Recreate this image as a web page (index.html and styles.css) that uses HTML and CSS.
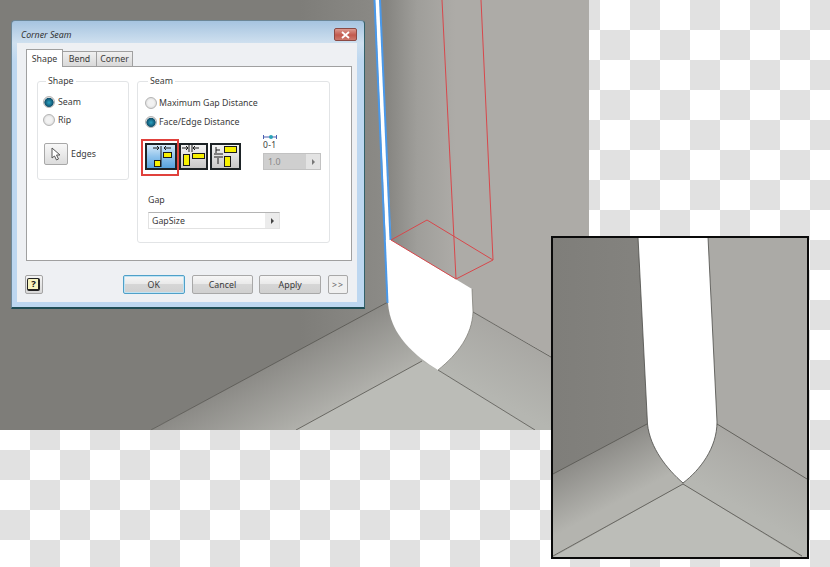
FILE: index.html
```html
<!DOCTYPE html>
<html lang="en">
<head>
  <meta charset="UTF-8">
  <title>Corner Seam</title>
  <link rel="stylesheet" href="styles.css">
</head>
<body>
  <div class="stage">
    <!-- the CAD viewport behind the dialog -->
    <svg class="scene" width="589" height="430" viewBox="0 0 589 430">
      <defs>
        <linearGradient id="leftWall" gradientUnits="userSpaceOnUse" x1="300" y1="0" x2="388" y2="0">
          <stop offset="0" stop-color="#7e7d79"/>
          <stop offset="1" stop-color="#8c8b87"/>
        </linearGradient>
        <linearGradient id="rightWall" gradientUnits="userSpaceOnUse" x1="386" y1="0" x2="455" y2="0">
          <stop offset="0" stop-color="#858480"/>
          <stop offset="0.45" stop-color="#9f9e9a"/>
          <stop offset="1" stop-color="#adaba7"/>
        </linearGradient>
        <linearGradient id="leftFloor" gradientUnits="userSpaceOnUse" x1="300" y1="350" x2="334" y2="412">
          <stop offset="0" stop-color="#8c8b87"/>
          <stop offset="1" stop-color="#b2b2ad"/>
        </linearGradient>
        <linearGradient id="rightFloor" gradientUnits="userSpaceOnUse" x1="500" y1="330" x2="470" y2="385">
          <stop offset="0" stop-color="#a9a8a4"/>
          <stop offset="1" stop-color="#b5b6b1"/>
        </linearGradient>
      </defs>
      <polygon fill="url(#leftWall)" points="0,0 376,0 388,303 151,430 0,430"/>
      <polygon fill="url(#rightWall)" points="376,0 589,0 589,378 473,312 388,303"/>
      <polygon fill="url(#leftFloor)" points="151,430 388,302 438,370 296,430"/>
      <polygon fill="url(#rightFloor)" points="473,312 589,378 589,430 535,430 438,370"/>
      <polygon fill="#bbbcb7" points="296,430 422,361 438,370 535,430"/>
      <g class="edge">
        <line x1="151" y1="430" x2="388" y2="302"/>
        <line x1="473" y1="312" x2="589" y2="379"/>
        <line x1="296" y1="430" x2="422" y2="361"/>
        <line x1="438" y1="370" x2="535" y2="430"/>
      </g>
      <path class="cut" d="M391 240 L472 289 L473 312 C472 335 458 354 438 370 C415 356 390 335 388 303 L385 240 Z"/>
      <path class="cut-line" d="M472 289 L473 312 C472 335 458 354 438 370"/>
      <polygon fill="#fff" points="375,0 380,0 391,240 391,246 386,246"/>
      <g class="band">
        <line x1="374.500" y1="0" x2="387.500" y2="303"/>
        <line x1="380" y1="0" x2="390.500" y2="240"/>
      </g>
      <g class="wire">
        <polygon points="391,240 427,220 493,260 456,279"/>
        <line x1="442" y1="0" x2="456" y2="279"/>
        <line x1="481" y1="0" x2="493" y2="260"/>
      </g>
    </svg>

    <div class="inset">
      <svg width="254" height="319" viewBox="553 238 254 319">
        <defs>
          <linearGradient id="insetLeftFloor" gradientUnits="userSpaceOnUse" x1="600" y1="449" x2="626" y2="498">
            <stop offset="0" stop-color="#8d8c88"/>
            <stop offset="1" stop-color="#b4b4af"/>
          </linearGradient>
          <linearGradient id="insetRightFloor" gradientUnits="userSpaceOnUse" x1="765" y1="452" x2="735" y2="505">
            <stop offset="0" stop-color="#aaa9a5"/>
            <stop offset="1" stop-color="#b6b7b2"/>
          </linearGradient>
          <linearGradient id="insetLeftWall" gradientUnits="userSpaceOnUse" x1="553" y1="0" x2="650" y2="0">
            <stop offset="0" stop-color="#7f7e7a"/>
            <stop offset="1" stop-color="#84837f"/>
          </linearGradient>
        </defs>
        <rect x="553" y="238" width="254" height="319" fill="url(#insetLeftWall)"/>
        <polygon fill="#abaaa6" points="700,238 807,238 807,479 717,424"/>
        <polygon fill="url(#insetLeftFloor)" points="553,474 647,424 683,484 553,557"/>
        <polygon fill="url(#insetRightFloor)" points="717,424 807,479 807,557 802,557 683,484"/>
        <polygon fill="#bcbdb8" points="553,557 683,484 802,557"/>
        <g class="edge">
          <line x1="553" y1="474" x2="647" y2="424"/>
          <line x1="717" y1="424" x2="807" y2="479"/>
          <line x1="683" y1="484" x2="553" y2="556"/>
          <line x1="683" y1="484" x2="802" y2="556"/>
        </g>
        <path class="cut cut-inset" d="M638 237 L647.500 424 C650 448 667 469 683 483 C700 470 717 448 717 422 L708 237 Z"/>
      </svg>
    </div>

    <div class="dialog">
      <div class="titlebar">
        <span class="title">Corner Seam</span>
        <span class="close">
          <svg width="9" height="8" viewBox="0 0 9 8"><path d="M1 1 L8 7 M8 1 L1 7"/></svg>
        </span>
      </div>
      <div class="client">
        <div class="tabs">
          <span class="tab tab-active">Shape</span>
          <span class="tab tab-bend">Bend</span>
          <span class="tab tab-corner">Corner</span>
        </div>
        <div class="panel">
          <fieldset class="group group-shape">
            <legend>Shape</legend>
            <div class="option"><span class="radio radio-on"></span>Seam</div>
            <div class="option"><span class="radio"></span>Rip</div>
            <div class="edges">
              <span class="btn-pick">
                <svg width="12" height="14" viewBox="0 0 12 14"><path d="M2 1 L2 11 L4.500 9 L6.500 13 L8.500 12 L6.500 8 L10 8 Z"/></svg>
              </span>
              Edges
            </div>
          </fieldset>
          <fieldset class="group group-seam">
            <legend>Seam</legend>
            <div class="option"><span class="radio"></span>Maximum Gap Distance</div>
            <div class="option"><span class="radio radio-on"></span>Face/Edge Distance</div>
            <div class="tool-row">
              <div class="tools">
                <span class="tool tool-active">
                  <svg width="28" height="23" viewBox="0 0 28 23">
                    <path class="dim" d="M6 3 H12 M10 1 L12 3 L10 5 M14 1 V22 M17 3 H24 M19 1 L17 3 L19 5"/>
                    <rect class="block" x="16.500" y="7.500" width="8" height="5"/>
                    <rect class="block" x="7.500" y="15.500" width="6" height="6"/>
                  </svg>
                </span>
                <span class="tool tool-mid">
                  <svg width="25" height="23" viewBox="0 0 25 23">
                    <path class="dim" d="M1 3 H7 M5 1 L7 3 L5 5 M8 0 V7 M11 0 V7 M12 3 H18 M14 1 L12 3 L14 5"/>
                    <rect class="block" x="2.500" y="9.500" width="6" height="11"/>
                    <rect class="block" x="11.500" y="8.500" width="12" height="5"/>
                  </svg>
                </span>
                <span class="tool">
                  <svg width="27" height="23" viewBox="0 0 27 23">
                    <path class="dim" d="M4 2 V8 M2 9 H11 M2 12 H11 M6 13 V19 M4 5 H8"/>
                    <rect class="block" x="12.500" y="1.500" width="12" height="6"/>
                    <rect class="block" x="12.500" y="11.500" width="6" height="10"/>
                  </svg>
                </span>
              </div>
              <div class="param">
                <div class="param-icon">
                  <svg width="14" height="6" viewBox="0 0 14 6">
                    <path d="M0.500 1 V5 M13.500 1 V5 M1 3 H13" stroke="#4a5fb0" fill="none"/>
                    <circle cx="8" cy="3" r="2" fill="#2aa3b8"/>
                  </svg>
                  <span class="param-range">0-1</span>
                </div>
                <div class="spinner">
                  <span class="spinner-value">1.0</span>
                  <span class="spinner-arrow"></span>
                </div>
              </div>
            </div>
            <div class="gap-label">Gap</div>
            <div class="combo">
              <span class="combo-value">GapSize</span>
              <span class="combo-arrow"></span>
            </div>
          </fieldset>
        </div>
        <div class="footer">
          <span class="help"><span class="help-mark">?</span></span>
          <span class="btn btn-default">OK</span>
          <span class="btn btn-cancel">Cancel</span>
          <span class="btn">Apply</span>
          <span class="btn btn-more">&gt;&gt;</span>
        </div>
      </div>
    </div>
  </div>
</body>
</html>
```

FILE: styles.css
```css
body {
  margin: 0;
  font-family: "Noto Sans", sans-serif;
  font-size: 8.800px;
  color: #3a3a3a;
}
.stage {
  position: relative;
  width: 830px;
  height: 567px;
  overflow: hidden;
  background: repeating-conic-gradient(#e1e1e1 0 25%, #fff 0 50%) 0 0 / 60px 60px;
}
.scene {
  position: absolute;
  left: 0;
  top: 0;
}
.edge line {
  stroke: #55544f;
  stroke-width: 0.8;
}
.cut {
  fill: #fff;
}
.cut-line {
  fill: none;
  stroke: #77766f;
  stroke-width: 0.7;
}
.cut-inset {
  stroke: #4a4a46;
  stroke-width: 0.8;
}
.band line {
  stroke: #4a98e8;
  stroke-width: 2;
}
.wire polygon,
.wire line {
  fill: none;
  stroke: #d8474b;
  stroke-width: 1;
}
.inset {
  position: absolute;
  left: 551px;
  top: 236px;
  width: 254px;
  height: 319px;
  border: 2px solid #0a0a0a;
  background: #7f7e7a;
}
.inset svg {
  display: block;
}

/* dialog */
.dialog {
  position: absolute;
  left: 11px;
  top: 20px;
  width: 354px;
  height: 289px;
  box-sizing: border-box;
  display: flex;
  flex-direction: column;
  padding: 0 7px 5px 5px;
  border: 1px solid #6d8797;
  border-right: 1px solid #33616a;
  border-bottom: 2px solid #1f4d55;
  border-radius: 4px 4px 0 0;
  background: linear-gradient(#a6c4e0 0, #cfe0ef 22px, #bdd7f0 40px);
}
.titlebar {
  height: 22px;
  box-sizing: border-box;
  padding-top: 5px;
  flex: none;
  display: flex;
  align-items: center;
  justify-content: space-between;
}
.title {
  font-style: italic;
  color: #333;
  padding-left: 4px;
}
.close {
  width: 23px;
  height: 13px;
  display: flex;
  align-items: center;
  justify-content: center;
  box-sizing: border-box;
  border: 1px solid #8b4a44;
  border-radius: 2px;
  background: linear-gradient(#dc9a90, #c25a4e 55%, #cc7a6e);
}
.close path {
  stroke: #fff;
  stroke-width: 1.8;
  fill: none;
}
.client {
  flex: 1;
  display: flex;
  flex-direction: column;
  padding: 6px 6px 0 9px;
  background: #eef0f3;
}
.tabs {
  display: flex;
  align-items: flex-end;
  height: 18px;
  margin-bottom: -1px;
  position: relative;
}
.tab {
  height: 15px;
  margin-bottom: 1px;
  box-sizing: border-box;
  display: flex;
  align-items: center;
  justify-content: center;
  border: 1px solid #a0a0a0;
  border-bottom: none;
  border-left: none;
  background: linear-gradient(#f0f0f0, #d9d9d9);
}
.tab-active {
  width: 37px;
  height: 18px;
  margin-bottom: 0;
  border-left: 1px solid #a0a0a0;
  background: #fff;
}
.tab-bend {
  width: 34px;
}
.tab-corner {
  width: 36px;
}
.panel {
  width: 326px;
  height: 195px;
  box-sizing: border-box;
  display: flex;
  align-items: flex-start;
  gap: 8px;
  padding: 8px 0 0 10px;
  border: 1px solid #a0a0a0;
  background: #fff;
}
.group {
  margin: 0;
  min-width: 0;
  box-sizing: border-box;
  border: 1px solid #e2e4e6;
  border-radius: 3px;
}
.group legend {
  margin-left: 3px;
  padding: 0 2px;
  line-height: 13px;
}
.group-shape {
  width: 92px;
  height: 105px;
  padding: 5px 0 0 5px;
}
.group-seam {
  width: 193px;
  height: 168px;
  padding: 5px 0 0 7px;
}
.option {
  height: 18px;
  display: flex;
  align-items: center;
  gap: 3px;
}
.group-seam .option {
  height: 19px;
  gap: 2px;
}
.radio {
  width: 12px;
  height: 12px;
  box-sizing: border-box;
  flex: none;
  border: 1px solid #b4b4b4;
  border-radius: 50%;
  background: radial-gradient(circle, #f2f2f2 0, #f2f2f2 40%, #cfcfcf 100%);
}
.radio-on {
  background: radial-gradient(circle at 50% 55%, #2aa3c2 0, #0f4f6c 58%, #dcdcdc 66%);
}
.edges {
  display: flex;
  align-items: center;
  gap: 3px;
  margin: 14px 0 0 1px;
}
.btn-pick {
  width: 24px;
  height: 22px;
  box-sizing: border-box;
  display: flex;
  align-items: center;
  justify-content: center;
  border: 1px solid #a8a8a8;
  border-radius: 2px;
  background: linear-gradient(#f8f8f8, #dcdcdc);
}
.btn-pick path {
  fill: #fff;
  stroke: #555;
  stroke-width: 1;
}
.tool-row {
  display: flex;
  align-items: flex-end;
  margin-top: 3px;
}
.tools {
  display: flex;
  gap: 2px;
  width: 96px;
}
.tool {
  position: relative;
  flex: none;
  width: 31px;
  height: 27px;
  box-sizing: border-box;
  display: flex;
  align-items: center;
  justify-content: center;
  border: 2px solid #1d2326;
  background: linear-gradient(#f4f4f4, #c8c8c8);
}
.tool-active {
  width: 32px;
  background: linear-gradient(#d5e9f8, #8fc3ec 50%, #57a2dd);
}
.tool-mid {
  width: 29px;
}
.tool-active::after {
  content: "";
  position: absolute;
  left: -6px;
  right: -4px;
  top: -6px;
  bottom: -8px;
  border: 2px solid #e0413c;
}
.tool svg {
  display: block;
}
.dim {
  fill: none;
  stroke: #1a1a1a;
  stroke-width: 1;
}
.block {
  fill: #f6f000;
  stroke: #1a1a1a;
  stroke-width: 1;
}
.param {
  margin-left: 22px;
}
.param-icon {
  height: 16px;
  margin-bottom: 3px;
  display: flex;
  flex-direction: column;
  align-items: flex-start;
}
.param-icon svg {
  display: block;
  flex: none;
}
.param-range {
  line-height: 9px;
  font-size: 8.500px;
  letter-spacing: 0.300px;
}
.spinner {
  width: 58px;
  height: 17px;
  box-sizing: border-box;
  display: flex;
  align-items: center;
  border: 1px solid #c2c2c2;
  background: #cfcfcf;
  color: #888;
}
.spinner-value {
  flex: 1;
  padding-left: 4px;
}
.spinner-arrow,
.combo-arrow {
  flex: none;
  height: 100%;
  display: flex;
  align-items: center;
  justify-content: center;
}
.spinner-arrow {
  width: 14px;
  background: #e3e3e3;
}
.spinner-arrow::before,
.combo-arrow::before {
  content: "";
  border-left: 3px solid #777;
  border-top: 3px solid transparent;
  border-bottom: 3px solid transparent;
}
.gap-label {
  margin: 24px 0 5px 3px;
  line-height: 13px;
}
.combo {
  width: 132px;
  height: 17px;
  margin-left: 3px;
  box-sizing: border-box;
  display: flex;
  align-items: center;
  border: 1px solid #e2e2e2;
  border-top-color: #b4b4b4;
}
.combo-value {
  flex: 1;
  padding-left: 3px;
}
.combo-arrow {
  width: 14px;
  background: #ececec;
}
.combo-arrow::before {
  border-left-color: #444;
}
.footer {
  display: flex;
  margin: 14px 3px 0 -1px;
  height: 19px;
}
.help {
  width: 18px;
  height: 19px;
  box-sizing: border-box;
  display: flex;
  align-items: center;
  justify-content: center;
  border: 1px solid #a4a4a4;
  border-radius: 2px;
  background: linear-gradient(#f4f4f4, #d8d8d8);
}
.help-mark {
  width: 13px;
  height: 13px;
  box-sizing: border-box;
  border: 1px solid #222;
  border-right-width: 2px;
  border-bottom-width: 2px;
  border-radius: 2px;
  background: #f7f4c0;
  color: #111;
  font-size: 9.500px;
  font-weight: bold;
  line-height: 10px;
  text-align: center;
}
.btn {
  width: 62px;
  margin-left: 6px;
  box-sizing: border-box;
  display: flex;
  align-items: center;
  justify-content: center;
  border: 1px solid #a8a8a8;
  border-radius: 2px;
  background: linear-gradient(#f6f6f6 0, #eaeaea 45%, #d6d6d6 50%, #d0d0d0);
}
.btn-default {
  margin-left: 80px;
  border-color: #4fa0c8;
  box-shadow: inset 0 0 0 1px #bfe3f4;
}
.btn-cancel {
  margin-left: 7px;
}
.btn-more {
  width: 20px;
  margin-left: 7px;
  background: #f0f0f0;
  letter-spacing: 1px;
  color: #666;
}
```
